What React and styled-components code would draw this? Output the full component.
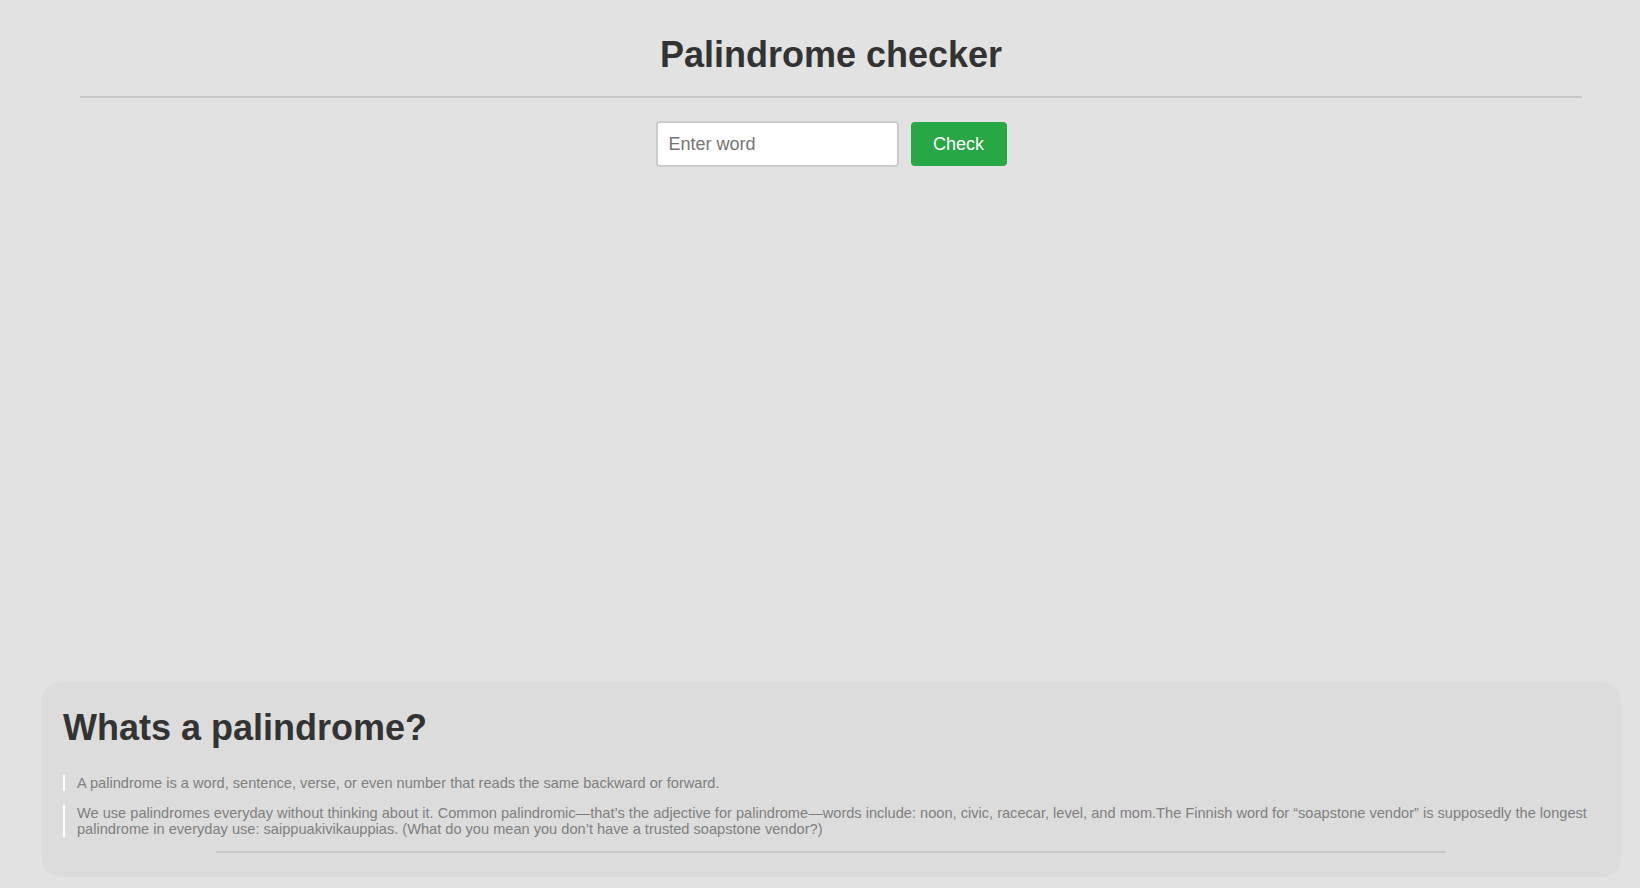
import React, { useState } from 'react';
import styled, { createGlobalStyle } from 'styled-components';

const GlobalStyle = createGlobalStyle`
    html, body {
        margin: 0;
        padding: 0;
        background-color: #e2e2e2;
        overflow: hidden;
    }
    body {
        font-family: "Liberation Sans", Arial, sans-serif;
    }
`;

const App = () => {
    const [word, setWord] = useState('');
    const [result, setResult] = useState(null);

    const handleCheck = () => {
        const clean = word.toLowerCase().replace(/[^a-z0-9]/g, '');
        if (!clean) {
            setResult(null);
            return;
        }
        setResult(clean === clean.split('').reverse().join(''));
    };

    return (
        <>
            <GlobalStyle />
            <Page>
                <Title>Palindrome checker</Title>
                <Divider />
                <Form onSubmit={(e) => { e.preventDefault(); handleCheck(); }}>
                    <Input
                        type="text"
                        placeholder="Enter word"
                        value={word}
                        onChange={(e) => setWord(e.target.value)}
                    />
                    <Button type="submit">Check</Button>
                </Form>
                {result !== null && (
                    <Result $ok={result}>
                        {result ? `"${word}" is a palindrome` : `"${word}" is not a palindrome`}
                    </Result>
                )}
                <InfoCard>
                    <InfoTitle>Whats a palindrome?</InfoTitle>
                    <Quote>A palindrome is a word, sentence, verse, or even number that reads the same backward or forward.</Quote>
                    <Quote>
                        We use palindromes everyday without thinking about it. Common palindromic—that’s the adjective for palindrome—words include: noon, civic, racecar, level, and mom.The Finnish word for “soapstone vendor” is supposedly the longest palindrome in everyday use: saippuakivikauppias. (What do you mean you don’t have a trusted soapstone vendor?)
                    </Quote>
                    <CardRule />
                </InfoCard>
            </Page>
        </>
    );
};

const Page = styled.div`
    width: 1662px;
    min-height: 888px;
    display: flex;
    flex-direction: column;
    box-sizing: border-box;
`;

const Title = styled.h1`
    margin: 34px 0 0;
    text-align: center;
    font-size: 36px;
    font-weight: 700;
    color: #333333;
`;

const Divider = styled.hr`
    margin: 20px 80px 0;
    border: none;
    height: 2px;
    background-color: #c8c8c8;
`;

const Form = styled.form`
    display: flex;
    justify-content: center;
    align-items: center;
    gap: 12px;
    margin-top: 23px;
`;

const Input = styled.input`
    width: 243px;
    height: 46px;
    box-sizing: border-box;
    padding: 0 11px;
    border: 2px solid #cccccc;
    border-radius: 4px;
    background: #ffffff;
    font-family: "Liberation Sans", Arial, sans-serif;
    font-size: 18px;
    color: #333;
    outline: none;
    &::placeholder {
        color: #757575;
    }
`;

const Button = styled.button`
    width: 96px;
    height: 44px;
    border: none;
    border-radius: 4px;
    background-color: #28a745;
    color: #ffffff;
    font-family: "Liberation Sans", Arial, sans-serif;
    font-size: 18px;
    cursor: pointer;
    &:hover {
        background-color: #218838;
    }
`;

const Result = styled.p`
    text-align: center;
    font-size: 18px;
    color: ${(p) => (p.$ok ? '#28a745' : '#c0392b')};
`;

const InfoCard = styled.section`
    margin: auto 41px 11px;
    box-sizing: border-box;
    padding: 25px 22px 24px;
    background-color: #dcdcdc;
    border-radius: 20px;
`;

const InfoTitle = styled.h2`
    margin: 0 0 26px;
    font-size: 36px;
    font-weight: 700;
    color: #333333;
`;

const Quote = styled.p`
    margin: 0 0 14px;
    padding-left: 12px;
    border-left: 2px solid #ffffff;
    font-size: 14.6px;
    line-height: 16px;
    color: #808080;
`;

const CardRule = styled.hr`
    margin: 14px auto 0;
    width: 1230px;
    border: none;
    height: 2px;
    background-color: #c8c8c8;
`;

export default App;
